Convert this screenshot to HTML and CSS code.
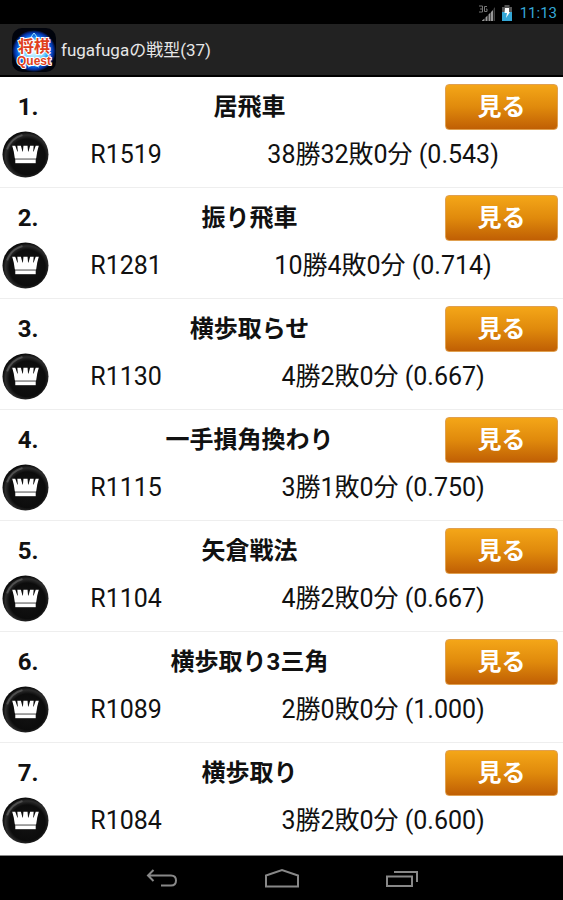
FILE: index.html
```html
<!DOCTYPE html>
<html lang="ja">
<head>
<meta charset="utf-8">
<meta name="viewport" content="width=device-width, initial-scale=1">
<title>fugafugaの戦型(37)</title>
<link rel="stylesheet" href="styles.css">
</head>
<body>
<svg class="defs" aria-hidden="true">
  <defs>
    <radialGradient id="disc" cx="54%" cy="55%" r="54%">
      <stop offset="0" stop-color="#141414"/>
      <stop offset=".72" stop-color="#0c0c0c"/>
      <stop offset=".88" stop-color="#2c2c2c"/>
      <stop offset="1" stop-color="#0a0a0a"/>
    </radialGradient>
    <symbol id="crown" viewBox="0 0 46 46">
      <circle cx="23" cy="23" r="22.500" fill="url(#disc)"/>
      <path d="M5 18Q9 7 20 4" fill="none" stroke="#aaa" stroke-width="2" opacity=".3"/>
      <path d="M10 14.500H13L15 20L15.500 20L15 14.500H18.500L20 20H20.500L21 14.500H25L25.500 20H26L27.500 14.500H31L30.500 20H31L33 14.500H36L34.500 20L33.500 26.500H12.500L11.500 20Z" fill="#fff"/>
      <path d="M12.500 26.500H33.500L33 28H13Z" fill="#aaa"/>
      <path d="M13 28H33V31.500H13Z" fill="#fff"/>
    </symbol>
  </defs>
</svg>
<div class="status">
  <svg class="signal" viewBox="0 0 18 18" aria-hidden="true">
    <path d="M1 2H4.500V8H1M2 5H4.500M9 2.500H6.500V7.500H9V5H8" fill="none" stroke="#777" stroke-width="1"/>
    <path d="M4 17H6.500V14.500L4 16.500ZM7.500 17H9.500V11.500L7.500 13.500ZM10.500 17H12.500V8.500L10.500 10.500ZM13 17H15V6L13 8Z" fill="#999"/>
    <path d="M15.500 17H17V3L15.500 5Z" fill="#444"/>
  </svg>
  <svg class="battery" viewBox="0 0 12 16" aria-hidden="true">
    <path d="M3.500 0H8.500V2H11V7H1V2H3.500Z" fill="#555"/>
    <path d="M1 7H11V16H1Z" fill="#35a7d6"/>
    <path d="M4 3H8V7H9L5 13L6 8H3.500Z" fill="#fff"/>
  </svg>
  <time class="clock">11:13</time>
</div>
<header class="bar">
  <svg class="logo" viewBox="0 0 44 44" role="img" aria-label="将棋Quest">
    <defs>
      <radialGradient id="glow">
        <stop offset="0" stop-color="#f0fcff"/>
        <stop offset=".5" stop-color="#6fd2ff"/>
        <stop offset=".72" stop-color="#0a6cf0"/>
        <stop offset=".88" stop-color="#0430a0"/>
        <stop offset="1" stop-color="#00030c"/>
      </radialGradient>
    </defs>
    <rect width="44" height="44" rx="10" fill="#00030c"/>
    <ellipse cx="22" cy="23" rx="22" ry="21" fill="url(#glow)"/>
    <path d="M19 9L22 5L25 9M16 39L21 37L27 39" fill="none" stroke="#9be6ff" stroke-width="1"/>
    <text class="logo-kanji" x="22" y="24" text-anchor="middle">将棋</text>
    <text class="logo-latin" x="22" y="37" text-anchor="middle">Quest</text>
  </svg>
  <h1 class="heading">fugafugaの戦型(37)</h1>
</header>
<main>
  <ol class="list">
    <li class="item">
      <div class="top"><span class="rank">1.</span><h2 class="name">居飛車</h2><button class="view" type="button">見る</button></div>
      <div class="stats"><svg class="crown" aria-hidden="true"><use href="#crown"/></svg><span class="rating">R1519</span><span class="record">38勝32敗0分 (0.543)</span></div>
    </li>
    <li class="item">
      <div class="top"><span class="rank">2.</span><h2 class="name">振り飛車</h2><button class="view" type="button">見る</button></div>
      <div class="stats"><svg class="crown" aria-hidden="true"><use href="#crown"/></svg><span class="rating">R1281</span><span class="record">10勝4敗0分 (0.714)</span></div>
    </li>
    <li class="item">
      <div class="top"><span class="rank">3.</span><h2 class="name">横歩取らせ</h2><button class="view" type="button">見る</button></div>
      <div class="stats"><svg class="crown" aria-hidden="true"><use href="#crown"/></svg><span class="rating">R1130</span><span class="record">4勝2敗0分 (0.667)</span></div>
    </li>
    <li class="item">
      <div class="top"><span class="rank">4.</span><h2 class="name">一手損角換わり</h2><button class="view" type="button">見る</button></div>
      <div class="stats"><svg class="crown" aria-hidden="true"><use href="#crown"/></svg><span class="rating">R1115</span><span class="record">3勝1敗0分 (0.750)</span></div>
    </li>
    <li class="item">
      <div class="top"><span class="rank">5.</span><h2 class="name">矢倉戦法</h2><button class="view" type="button">見る</button></div>
      <div class="stats"><svg class="crown" aria-hidden="true"><use href="#crown"/></svg><span class="rating">R1104</span><span class="record">4勝2敗0分 (0.667)</span></div>
    </li>
    <li class="item">
      <div class="top"><span class="rank">6.</span><h2 class="name">横歩取り3三角</h2><button class="view" type="button">見る</button></div>
      <div class="stats"><svg class="crown" aria-hidden="true"><use href="#crown"/></svg><span class="rating">R1089</span><span class="record">2勝0敗0分 (1.000)</span></div>
    </li>
    <li class="item">
      <div class="top"><span class="rank">7.</span><h2 class="name">横歩取り</h2><button class="view" type="button">見る</button></div>
      <div class="stats"><svg class="crown" aria-hidden="true"><use href="#crown"/></svg><span class="rating">R1084</span><span class="record">3勝2敗0分 (0.600)</span></div>
    </li>
  </ol>
</main>
<nav class="nav">
  <button class="key" type="button" aria-label="戻る">
    <svg viewBox="0 0 36 22"><path d="M9.500 2L4 7.500L9.500 13M4 7.500H27Q32 7.500 32 12.500Q32 17.500 27 17.500H17" fill="none" stroke="#888" stroke-width="2"/></svg>
  </button>
  <button class="key" type="button" aria-label="ホーム">
    <svg viewBox="0 0 36 22"><path d="M2 18.500V7.500L18 2L34 7.500V18.500Z" fill="none" stroke="#888" stroke-width="2"/></svg>
  </button>
  <button class="key" type="button" aria-label="最近のアプリ">
    <svg viewBox="0 0 36 22"><path d="M3 8.500H28V18H3ZM10 4H33V14" fill="none" stroke="#888" stroke-width="2"/></svg>
  </button>
</nav>
</body>
</html>
```
FILE: styles.css
```css
* {
  box-sizing: border-box;
}

body {
  margin: 0;
  min-height: 100vh;
  display: flex;
  flex-direction: column;
  background: #fff;
  color: #111;
  font-family: Roboto, "Noto Sans CJK JP", sans-serif;
}

.defs {
  position: absolute;
  width: 0;
  height: 0;
}

.status {
  display: flex;
  align-items: center;
  justify-content: flex-end;
  height: 24px;
  padding: 2px 6px 0 0;
  background: #000;
}

.signal {
  width: 18px;
  height: 18px;
  margin-right: 5px;
}

.battery {
  width: 12px;
  height: 16px;
  margin-right: 7px;
}

.clock {
  color: #35a7d6;
  font-size: 15px;
  line-height: 22px;
}

.bar {
  display: flex;
  align-items: center;
  gap: 5px;
  height: 53px;
  padding-left: 12px;
  background: #222;
  border-bottom: 2px solid #000;
}

.logo {
  width: 44px;
  height: 44px;
}

.logo-kanji,
.logo-latin {
  fill: #e0401c;
  stroke: #fff;
  stroke-width: 2px;
  paint-order: stroke;
  font-family: "Liberation Sans", "Noto Sans CJK JP", sans-serif;
  font-weight: 700;
}

.logo-kanji {
  font-size: 16px;
}

.logo-latin {
  font-size: 12px;
}

.heading {
  margin: 0;
  color: #e6e6e6;
  font-size: 17px;
  font-weight: 400;
  line-height: 24px;
}

.list {
  margin: 0;
  padding: 0 0 1px;
  list-style: none;
}

.item {
  padding: 7px 0 9px 2px;
  border-bottom: 1px solid #eee;
}

.item:last-child {
  border-bottom-color: #fff;
}

.top {
  display: flex;
  align-items: center;
  padding-right: 5px;
}

.rank {
  width: 52px;
  text-align: center;
  font-size: 24px;
  font-weight: 700;
  line-height: 32px;
}

.name {
  flex: 1;
  margin: 0;
  text-align: center;
  font-size: 24px;
  font-weight: 700;
  line-height: 32px;
}

.view {
  width: 113px;
  height: 46px;
  padding: 0;
  border: 1px solid #e0a050;
  border-radius: 4px;
  background: linear-gradient(#f4a618, #e08a0c 50%, #c05f04);
  color: #fff;
  font: 700 24px/32px Roboto, "Noto Sans CJK JP", sans-serif;
}

.stats {
  display: flex;
  align-items: center;
  margin-top: 1px;
  font-size: 25px;
  line-height: 32px;
}

.crown {
  flex: none;
  width: 47px;
  height: 47px;
}

.rating {
  flex: 3;
  text-align: center;
}

.record {
  flex: 7;
  text-align: center;
}

.nav {
  flex: 1;
  display: flex;
  align-items: center;
  justify-content: center;
  gap: 84px;
  min-height: 44px;
  padding-top: 2px;
  background: #000;
  border-top: 1px solid #888;
}

.key {
  display: flex;
  width: 36px;
  height: 22px;
  padding: 0;
  border: 0;
  background: none;
}
```
